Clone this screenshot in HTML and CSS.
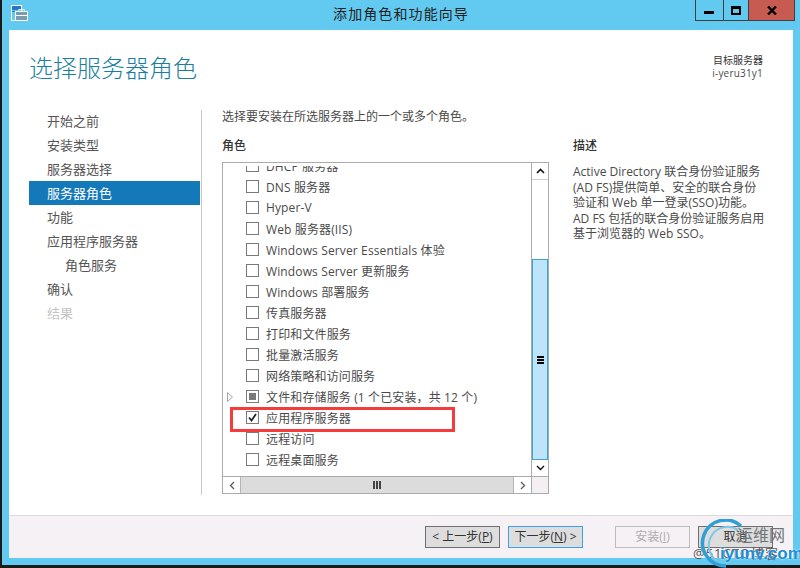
FILE: index.html
```html
<!DOCTYPE html>
<html lang="zh-CN">
<head>
    <meta charset="UTF-8">
    <title>添加角色和功能向导</title>
    <link rel="stylesheet" href="styles.css">
</head>
<body>
    <div class="window">
        <div class="titlebar">
            <div class="title-side">
                <svg class="app-icon" width="18" height="17" viewBox="0 0 18 17">
                    <rect x="0.5" y="0.5" width="10" height="15" fill="#62c9f0" stroke="#fff"/>
                    <rect x="1" y="1" width="9" height="4" fill="#1f78c8"/>
                    <rect x="1" y="6" width="9" height="1" fill="#1f78c8"/>
                    <rect x="4.5" y="6.5" width="12" height="9" fill="#7d9bb0" stroke="#fff"/>
                    <rect x="8" y="4.5" width="5" height="2" fill="none" stroke="#fff"/>
                    <rect x="5" y="10" width="11" height="1" fill="#fff"/>
                </svg>
            </div>
            <div class="title-text">添加角色和功能向导</div>
            <div class="title-side controls">
                <div class="ctrl ctrl-min"><span class="min-glyph"></span></div>
                <div class="ctrl ctrl-max"><span class="max-glyph"></span></div>
                <div class="ctrl ctrl-close">
                    <svg width="10" height="9" viewBox="0 0 10 9"><path d="M1 0.5 L9 8.5 M9 0.5 L1 8.5" stroke="#000" stroke-width="2.4" fill="none"/></svg>
                </div>
            </div>
        </div>

        <div class="panel">
            <div class="header">
                <h1>选择服务器角色</h1>
                <div class="target">
                    <div class="target-label">目标服务器</div>
                    <div class="target-name">i-yeru31y1</div>
                </div>
            </div>

            <div class="main">
                <div class="nav">
                    <div class="nav-item">开始之前</div>
                    <div class="nav-item">安装类型</div>
                    <div class="nav-item">服务器选择</div>
                    <div class="nav-item active">服务器角色</div>
                    <div class="nav-item">功能</div>
                    <div class="nav-item">应用程序服务器</div>
                    <div class="nav-item sub">角色服务</div>
                    <div class="nav-item">确认</div>
                    <div class="nav-item off">结果</div>
                </div>

                <div class="content">
                    <div class="intro">选择要安装在所选服务器上的一个或多个角色。</div>
                    <div class="columns">
                        <div class="roles">
                            <div class="col-title">角色</div>
                            <div class="listbox">
                                <div class="list-view">
                                    <div class="rows">
                                        <div class="row"><span class="arrow"></span><span class="box"></span>DHCP 服务器</div>
                                        <div class="row"><span class="arrow"></span><span class="box"></span>DNS 服务器</div>
                                        <div class="row"><span class="arrow"></span><span class="box"></span>Hyper-V</div>
                                        <div class="row"><span class="arrow"></span><span class="box"></span>Web 服务器(IIS)</div>
                                        <div class="row"><span class="arrow"></span><span class="box"></span>Windows Server Essentials 体验</div>
                                        <div class="row"><span class="arrow"></span><span class="box"></span>Windows Server 更新服务</div>
                                        <div class="row"><span class="arrow"></span><span class="box"></span>Windows 部署服务</div>
                                        <div class="row"><span class="arrow"></span><span class="box"></span>传真服务器</div>
                                        <div class="row"><span class="arrow"></span><span class="box"></span>打印和文件服务</div>
                                        <div class="row"><span class="arrow"></span><span class="box"></span>批量激活服务</div>
                                        <div class="row"><span class="arrow"></span><span class="box"></span>网络策略和访问服务</div>
                                        <div class="row">
                                            <span class="arrow"><svg width="6" height="10" viewBox="0 0 6 10"><path d="M0.5 0.5 L5.5 5 L0.5 9.5 Z" fill="#fff" stroke="#a6a6a6"/></svg></span>
                                            <span class="box partial"></span>文件和存储服务 (1 个已安装，共 12 个)
                                        </div>
                                        <div class="row">
                                            <span class="arrow"></span>
                                            <span class="box"><svg width="11" height="11" viewBox="0 0 11 11"><path d="M2 5.5 L4.5 8.5 L9 2" stroke="#222" stroke-width="1.7" fill="none"/></svg></span>应用程序服务器
                                        </div>
                                        <div class="row"><span class="arrow"></span><span class="box"></span>远程访问</div>
                                        <div class="row"><span class="arrow"></span><span class="box"></span>远程桌面服务</div>
                                    </div>
                                </div>
                                <div class="vscroll">
                                    <div class="sb-btn sb-btn-v">
                                        <svg width="9" height="6" viewBox="0 0 9 6"><path d="M1 5 L4.5 1.5 L8 5" stroke="#111" stroke-width="1.6" fill="none"/></svg>
                                    </div>
                                    <div class="vtrack">
                                        <div class="vthumb"><span class="grip-h"></span></div>
                                    </div>
                                    <div class="sb-btn sb-btn-v">
                                        <svg width="9" height="6" viewBox="0 0 9 6"><path d="M1 1 L4.5 4.5 L8 1" stroke="#111" stroke-width="1.4" fill="none"/></svg>
                                    </div>
                                </div>
                                <div class="hscroll">
                                    <div class="sb-btn sb-btn-h">
                                        <svg width="6" height="9" viewBox="0 0 6 9"><path d="M5 1 L1.5 4.5 L5 8" stroke="#555" stroke-width="1.2" fill="none"/></svg>
                                    </div>
                                    <div class="hthumb"><span class="grip-v"></span></div>
                                    <div class="sb-btn sb-btn-h">
                                        <svg width="6" height="9" viewBox="0 0 6 9"><path d="M1 1 L4.5 4.5 L1 8" stroke="#555" stroke-width="1.2" fill="none"/></svg>
                                    </div>
                                </div>
                                <div class="corner"></div>
                            </div>
                            <div class="highlight"></div>
                        </div>
                        <div class="desc">
                            <div class="col-title">描述</div>
                            <p>Active Directory 联合身份验证服务<br>(AD FS)提供简单、安全的联合身份<br>验证和 Web 单一登录(SSO)功能。<br>AD FS 包括的联合身份验证服务启用<br>基于浏览器的 Web SSO。</p>
                        </div>
                    </div>
                </div>
            </div>

            <div class="footer">
                <div class="btn">&lt; 上一步(<u>P</u>)</div>
                <div class="btn focus">下一步(<u>N</u>) &gt;</div>
                <div class="btn disabled gap-left">安装(<u>I</u>)</div>
                <div class="btn">取消</div>
            </div>
        </div>
    </div>

    <div class="watermark">
        <span class="wm-site">运维网</span>
        <span class="wm-blog">@51CTO博客</span>
        <svg class="wm-ring" width="56" height="50" viewBox="0 0 56 50">
            <path d="M44 7 A23 23 0 1 0 29 47" stroke="#2f9fd6" stroke-width="3.5" fill="none"/>
            <path d="M41 11 A18 18 0 1 0 20 42" stroke="#7cc6e6" stroke-width="2" fill="none"/>
        </svg>
        <span class="wm-url">iyunv.com</span>
    </div>
</body>
</html>
```

FILE: styles.css
```css
html, body {
    margin: 0;
    padding: 0;
}
body {
    width: 800px;
    height: 568px;
    overflow: hidden;
    position: relative;
    background-color: #1a1a1a;
    font-family: "Open Sans", "Noto Sans CJK SC", sans-serif;
    font-size: 12px;
    color: #4a4a4a;
}
.window {
    margin-left: 2px;
    height: 565px;
    background-color: #62c9f0;
    display: flex;
    flex-direction: column;
}
.titlebar {
    height: 30px;
    display: flex;
    justify-content: space-between;
    flex-shrink: 0;
}
.title-side {
    width: 105px;
    display: flex;
}
.app-icon {
    margin: 5px 0 0 9px;
}
.title-text {
    font-size: 14px;
    letter-spacing: 1.1px;
    line-height: 28px;
    color: #222;
}
.controls {
    justify-content: flex-end;
    padding-right: 5px;
    box-sizing: border-box;
    align-items: flex-start;
}
.ctrl {
    height: 20px;
    border: 1px solid #3f3f3f;
    border-top: none;
    border-left: none;
    display: flex;
    align-items: center;
    justify-content: center;
}
.ctrl-min {
    width: 27px;
    border-left: 1px solid #3f3f3f;
}
.ctrl-max {
    width: 25px;
}
.ctrl-close {
    width: 45px;
    background-color: #c75b52;
}
.min-glyph {
    width: 10px;
    height: 3px;
    margin-top: 5px;
    background-color: #000;
}
.max-glyph {
    width: 6px;
    height: 4px;
    border: 2px solid #000;
    border-top-width: 3px;
}
.panel {
    margin: 0 7px 7px 7px;
    flex: 1;
    background-color: #fff;
    display: flex;
    flex-direction: column;
}
.header {
    height: 80px;
    flex-shrink: 0;
    display: flex;
    justify-content: space-between;
    padding: 0 30px 0 20px;
    box-sizing: border-box;
}
h1 {
    margin: 21px 0 0;
    font-size: 24px;
    line-height: 34px;
    font-weight: 300;
    color: #1a7f9f;
}
.target {
    margin-top: 24px;
    font-size: 10px;
    line-height: 13px;
    text-align: right;
}
.target-label {
    color: #333;
}
.target-name {
    letter-spacing: 0.2px;
}
.main {
    flex: 1;
    display: flex;
    min-height: 0;
}
.nav {
    width: 171px;
    margin-left: 20px;
    margin-top: -1px;
    flex-shrink: 0;
}
.nav-item {
    height: 24px;
    line-height: 24px;
    font-size: 13px;
    padding-left: 18px;
    color: #555;
}
.nav-item.active {
    background-color: #1479b8;
    color: #fff;
}
.nav-item.sub {
    padding-left: 36px;
}
.nav-item.off {
    color: #c4c4c4;
}
.content {
    flex: 1;
    margin-left: 1px;
    border-left: 1px solid #c8c8c8;
    padding-left: 20px;
    margin-bottom: 20px;
}
.intro {
    line-height: 12px;
    padding-top: 1px;
    margin-bottom: 14px;
}
.columns {
    display: flex;
}
.roles {
    width: 327px;
    position: relative;
}
.col-title {
    line-height: 18px;
    margin-bottom: 7px;
    font-weight: 500;
    color: #333;
}
.listbox {
    height: 332px;
    box-sizing: border-box;
    border: 1px solid #ababab;
    display: grid;
    grid-template-columns: 1fr 17px;
    grid-template-rows: 1fr 17px;
}
.list-view {
    overflow: hidden;
    min-width: 0;
    margin-top: 3px;
}
.rows {
    margin-top: -11px;
    letter-spacing: 0.13px;
}
.row {
    height: 21px;
    display: flex;
    align-items: center;
    white-space: nowrap;
}
.arrow {
    width: 23px;
    flex-shrink: 0;
    padding-left: 4px;
    box-sizing: border-box;
    display: flex;
    align-items: center;
}
.box {
    width: 13px;
    height: 13px;
    flex-shrink: 0;
    border: 1px solid #7a7a7a;
    box-sizing: border-box;
    margin-right: 7px;
    display: flex;
    align-items: center;
    justify-content: center;
}
.box.partial::before {
    content: "";
    width: 7px;
    height: 7px;
    background-color: #7a7a7a;
}
.vscroll {
    grid-column: 2;
    grid-row: 1;
    display: flex;
    flex-direction: column;
    border-left: 1px solid #ababab;
}
.sb-btn {
    display: flex;
    align-items: center;
    justify-content: center;
    flex-shrink: 0;
    background-color: #fff;
}
.sb-btn-v {
    height: 16px;
}
.sb-btn-v:first-child {
    border-bottom: 1px solid #cfcfcf;
}
.sb-btn-h {
    width: 17px;
}
.vtrack {
    flex: 1;
    padding: 79px 0 0;
    display: flex;
    flex-direction: column;
}
.vthumb {
    flex: 1;
    background-color: #bde4fb;
    border: 1px solid #3ea3c4;
    display: flex;
    align-items: center;
    justify-content: center;
}
.grip-h {
    width: 7px;
    height: 8px;
    background: repeating-linear-gradient(#000 0 2px, transparent 2px 3px);
}
.hscroll {
    grid-column: 1;
    grid-row: 2;
    display: flex;
    border-top: 1px solid #ababab;
}
.hthumb {
    flex: 1;
    background-color: #dcdcdc;
    border: 1px solid #b5b5b5;
    border-width: 0 1px;
    display: flex;
    align-items: center;
    justify-content: center;
}
.grip-v {
    width: 8px;
    height: 8px;
    background: repeating-linear-gradient(90deg, #444 0 2px, transparent 2px 3px);
}
.corner {
    grid-column: 2;
    grid-row: 2;
    background-color: #f4eff3;
    border-top: 1px solid #ababab;
    border-left: 1px solid #ababab;
}
.highlight {
    position: absolute;
    left: 8px;
    top: 270px;
    width: 225px;
    height: 25px;
    box-sizing: border-box;
    border: 3px solid #f53b3b;
}
.desc {
    margin-left: 24px;
}
.desc .col-title {
    margin-bottom: 9px;
}
.desc p {
    margin: 0;
    line-height: 15.5px;
    white-space: nowrap;
}
.footer {
    height: 43px;
    flex-shrink: 0;
    box-sizing: border-box;
    border-top: 1px solid #dedadc;
    background-color: #f6f1f4;
    padding: 10px 20px 0 0;
    display: flex;
    justify-content: flex-end;
    align-items: flex-start;
    gap: 8px;
}
.btn {
    width: 75px;
    height: 22px;
    box-sizing: border-box;
    border: 1px solid #707070;
    background-color: #dddddd;
    text-align: center;
    line-height: 20px;
    color: #333;
    white-space: nowrap;
}
.btn.focus {
    border-color: #3c9fe8;
}
.btn.disabled {
    border-color: #bdbdbd;
    background-color: #f6f1f4;
    color: #adadad;
}
.gap-left {
    margin-left: 24px;
}
.watermark {
    position: absolute;
    left: 693px;
    top: 518px;
    width: 107px;
    height: 50px;
}
.wm-ring {
    position: absolute;
    left: 4px;
    top: 1px;
}
.wm-site {
    position: absolute;
    left: 44px;
    top: 7px;
    font-size: 16px;
    line-height: 20px;
    color: #6f7478;
}
.wm-blog {
    position: absolute;
    left: 0;
    top: 27px;
    font-size: 13px;
    line-height: 16px;
    color: #555;
    letter-spacing: 1px;
    white-space: nowrap;
}
.wm-url {
    position: absolute;
    left: 27px;
    top: 26px;
    font-family: "Liberation Sans", sans-serif;
    font-size: 17px;
    line-height: 20px;
    font-weight: 700;
    color: #1a8fd8;
    text-shadow: 0 0 2px #fff;
    white-space: nowrap;
}
```
